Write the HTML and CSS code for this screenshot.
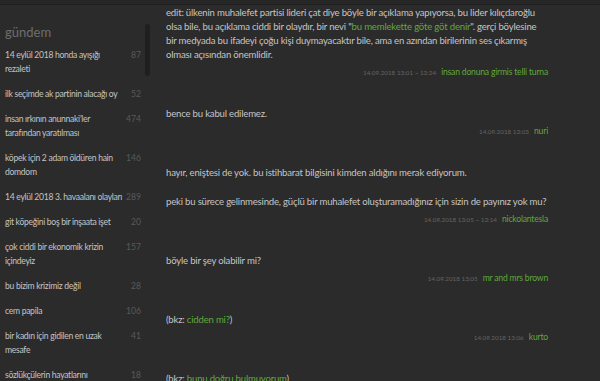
FILE: index.html
```html
<!DOCTYPE html>
<html lang="tr">
<head>
    <meta charset="UTF-8">
    <meta name="viewport" content="width=device-width, initial-scale=1.0">
    <title>gündem</title>
    <link rel="stylesheet" href="styles.css">
</head>
<body>

<div class="top-bar"></div>

<div class="layout">
    <aside class="sidebar">
        <div class="scroll-thumb"></div>
        <h2>gündem</h2>
        <ul class="topic-list">
            <li><span class="topic-title">14 eylül 2018 honda ayışığı rezaleti</span><span class="topic-count">87</span></li>
            <li><span class="topic-title">ilk seçimde ak partinin alacağı oy</span><span class="topic-count">52</span></li>
            <li><span class="topic-title">insan ırkının anunnaki'ler tarafından yaratılması</span><span class="topic-count">474</span></li>
            <li><span class="topic-title">köpek için 2 adam öldüren hain domdom</span><span class="topic-count">146</span></li>
            <li><span class="topic-title">14 eylül 2018 3. havaalanı olayları</span><span class="topic-count">289</span></li>
            <li><span class="topic-title">git köpeğini boş bir inşaata işet</span><span class="topic-count">20</span></li>
            <li><span class="topic-title">çok ciddi bir ekonomik krizin içindeyiz</span><span class="topic-count">157</span></li>
            <li><span class="topic-title">bu bizim krizimiz değil</span><span class="topic-count">28</span></li>
            <li><span class="topic-title">cem papila</span><span class="topic-count">106</span></li>
            <li><span class="topic-title">bir kadın için gidilen en uzak mesafe</span><span class="topic-count">41</span></li>
            <li><span class="topic-title">sözlükçülerin hayatlarını</span><span class="topic-count">18</span></li>
        </ul>
    </aside>

    <main class="entries">
        <div class="entry">
            <div class="entry-text">
                edit: ülkenin muhalefet partisi lideri çat diye böyle bir açıklama yapıyorsa, bu lider kılıçdaroğlu olsa bile, bu açıklama ciddi bir olaydır, bir nevi "<a href="#">bu memlekette göte göt denir</a>". gerçi böylesine bir medyada bu ifadeyi çoğu kişi duymayacaktır bile, ama en azından birilerinin ses çıkarmış olması açısından önemlidir.
            </div>
            <div class="entry-footer"><span class="entry-date">14.09.2018 13:01 ~ 13:24</span><a href="#" class="entry-author">insan donuna girmis telli turna</a></div>
        </div>

        <div class="entry">
            <div class="entry-text">bence bu kabul edilemez.</div>
            <div class="entry-footer"><span class="entry-date">14.09.2018 13:03</span><a href="#" class="entry-author">nuri</a></div>
        </div>

        <div class="entry">
            <div class="entry-text">
                <p>hayır, eniştesi de yok. bu istihbarat bilgisini kimden aldığını merak ediyorum.</p>
                <p>peki bu sürece gelinmesinde, güçlü bir muhalefet oluşturamadığınız için sizin de payınız yok mu?</p>
            </div>
            <div class="entry-footer"><span class="entry-date">14.09.2018 13:05 ~ 13:14</span><a href="#" class="entry-author">nickolantesla</a></div>
        </div>

        <div class="entry">
            <div class="entry-text">böyle bir şey olabilir mi?</div>
            <div class="entry-footer"><span class="entry-date">14.09.2018 13:05</span><a href="#" class="entry-author">mr and mrs brown</a></div>
        </div>

        <div class="entry">
            <div class="entry-text">(bkz: <a href="#">cidden mi?</a>)</div>
            <div class="entry-footer"><span class="entry-date">14.09.2018 13:06</span><a href="#" class="entry-author">kurto</a></div>
        </div>

        <div class="entry">
            <div class="entry-text">(bkz: <a href="#">bunu doğru bulmuyorum</a>)</div>
        </div>
    </main>
</div>

</body>
</html>
```

FILE: styles.css
```css
/* Global Styles */
body {
    font-family: 'Lato', 'Liberation Sans', sans-serif;
    background: #2b2b2b;
    color: #c4c4c4;
    margin: 0;
    padding: 0;
    overflow: hidden;
    height: 381px;
}

a {
    color: #60a83c;
    text-decoration: none;
}

.top-bar {
    height: 4px;
    background: #262626;
    border-bottom: 1px solid #1f1f1f;
}

.layout {
    display: flex;
}

/* Sidebar */
.sidebar {
    position: relative;
    width: 150px;
    flex-shrink: 0;
    padding-left: 5px;
    box-sizing: border-box;
}

.scroll-thumb {
    position: absolute;
    top: 19px;
    right: 0;
    width: 5px;
    height: 52px;
    border-radius: 3px;
    background: #1f1f1f;
}

.sidebar h2 {
    font-size: 13px;
    font-weight: normal;
    color: #6e6e6e;
    margin: 19px 0 3px;
}

.topic-list {
    list-style: none;
    margin: 0;
    padding: 0;
}

.topic-list li {
    display: flex;
    justify-content: space-between;
    font-size: 8.6px;
    letter-spacing: -0.3px;
    line-height: 14px;
    padding: 5px 9px 6px 0;
}

.topic-title {
    width: 120px;
}

.topic-count {
    color: #5a5a5a;
    letter-spacing: 0;
}

/* Entries */
.entries {
    width: 382px;
    padding: 1px 0 0 16px;
    font-size: 9.6px;
    letter-spacing: -0.2px;
    line-height: 14px;
}

.entry {
    margin-bottom: 27px;
}

.entry-text p {
    margin: 0 0 15px;
}

.entry-text p:last-child {
    margin-bottom: 0;
}

.entry-footer {
    display: flex;
    justify-content: flex-end;
    align-items: baseline;
    gap: 5px;
    margin-top: 3px;
}

.entry-date {
    font-size: 6.3px;
    letter-spacing: 0;
    color: #646464;
}

.entry-author {
    font-size: 8.6px;
}
```
